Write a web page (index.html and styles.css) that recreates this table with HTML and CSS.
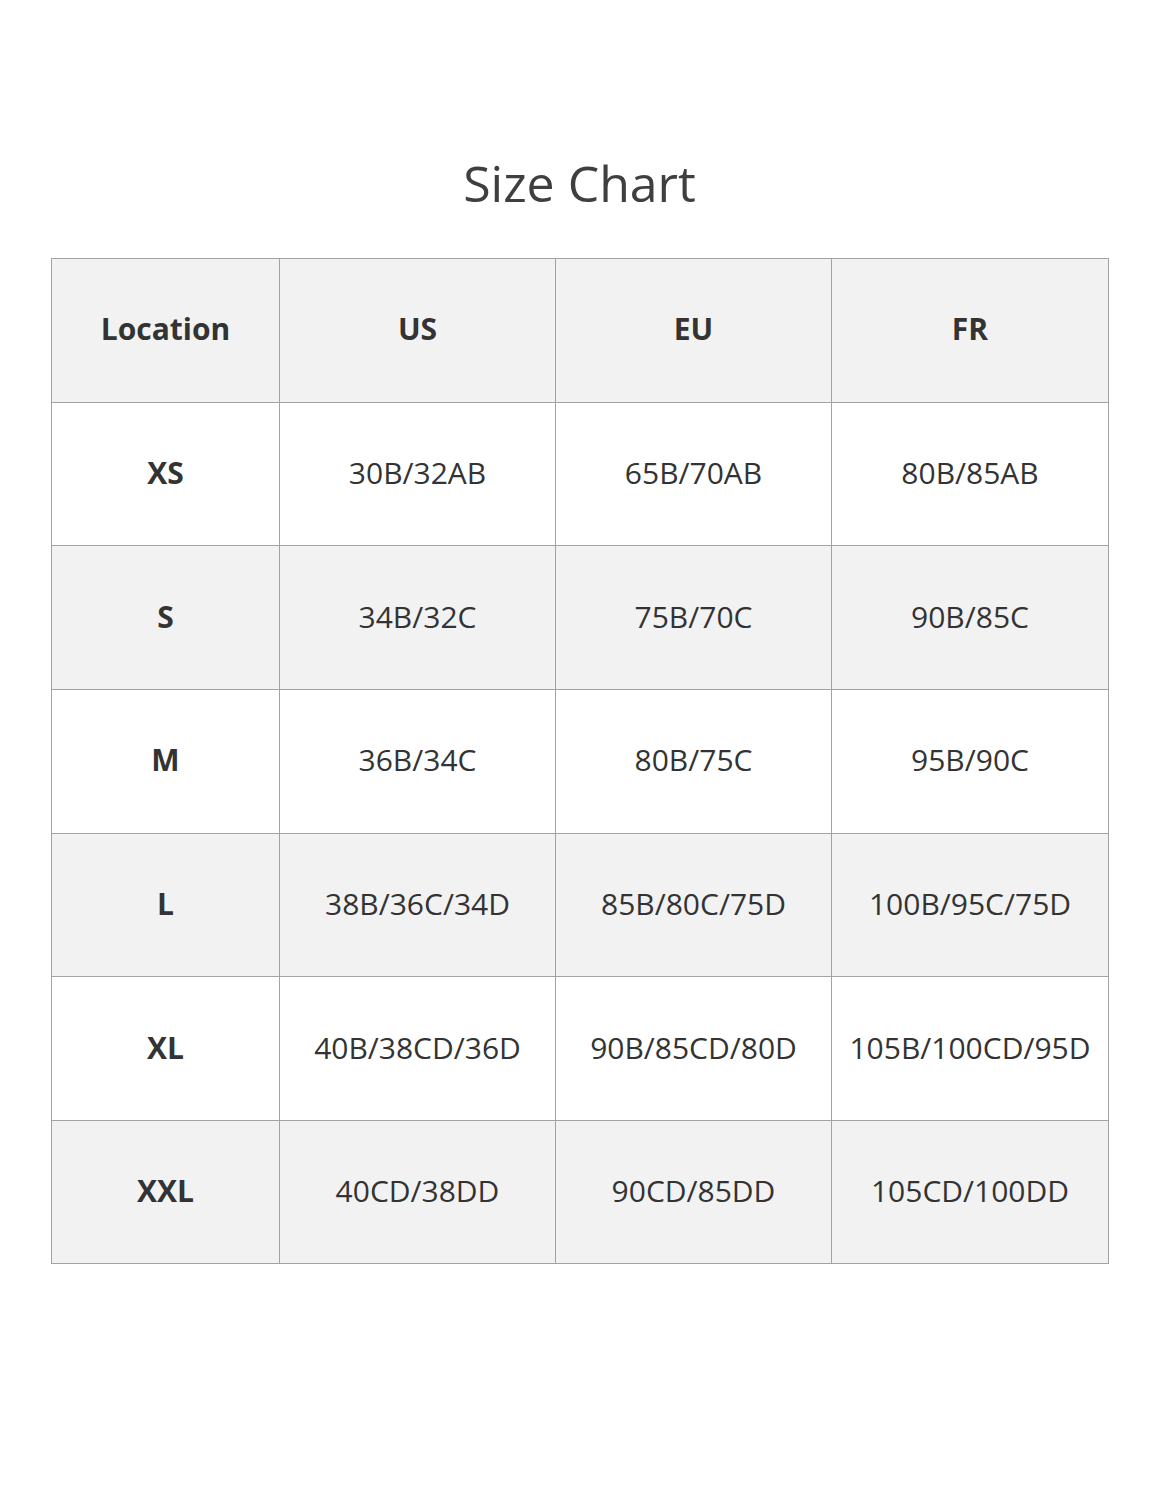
FILE: index.html
```html
<!DOCTYPE html>
<html>
<head>
<meta charset="utf-8">
<link rel="stylesheet" href="styles.css">
</head>
<body>
<div class="page">
  <h1 class="title">Size Chart</h1>
  <table class="chart">
    <colgroup>
      <col class="c1"><col class="c2"><col class="c3"><col class="c4">
    </colgroup>
    <tr class="grey head"><th>Location</th><th>US</th><th>EU</th><th>FR</th></tr>
    <tr><th>XS</th><td>30B/32AB</td><td>65B/70AB</td><td>80B/85AB</td></tr>
    <tr class="grey"><th>S</th><td>34B/32C</td><td>75B/70C</td><td>90B/85C</td></tr>
    <tr><th>M</th><td>36B/34C</td><td>80B/75C</td><td>95B/90C</td></tr>
    <tr class="grey"><th>L</th><td>38B/36C/34D</td><td>85B/80C/75D</td><td>100B/95C/75D</td></tr>
    <tr><th>XL</th><td>40B/38CD/36D</td><td>90B/85CD/80D</td><td>105B/100CD/95D</td></tr>
    <tr class="grey"><th>XXL</th><td>40CD/38DD</td><td>90CD/85DD</td><td>105CD/100DD</td></tr>
  </table>
</div>
</body>
</html>
```
FILE: styles.css
```css
html, body {
  margin: 0;
  padding: 0;
  background: #ffffff;
}
.page {
  width: 1154px;
  height: 1500px;
  font-family: "Open Sans", "Noto Sans", sans-serif;
  color: #333333;
}
.title {
  margin: 0;
  padding: 146px 0 0 5px;
  height: 112px;
  text-align: center;
  font-weight: 400;
  font-size: 50px;
  line-height: 74px;
  color: #3f3f3f;
}
.chart {
  margin-left: 51px;
  width: 1057px;
  border-collapse: collapse;
  table-layout: fixed;
}
.c1 { width: 228px; }
.c2 { width: 276px; }
.c3 { width: 276px; }
.c4 { width: 277px; }
.chart th, .chart td {
  border: 1.5px solid #a3a3a3;
  height: 139.65px;
  padding: 0 0 3px 0;
  text-align: center;
  vertical-align: middle;
  font-size: 30px;
  color: #333333;
}
.chart th {
  font-weight: 700;
}
.chart td {
  font-weight: 400;
}
.grey th, .grey td {
  background: #f2f2f2;
}
```
